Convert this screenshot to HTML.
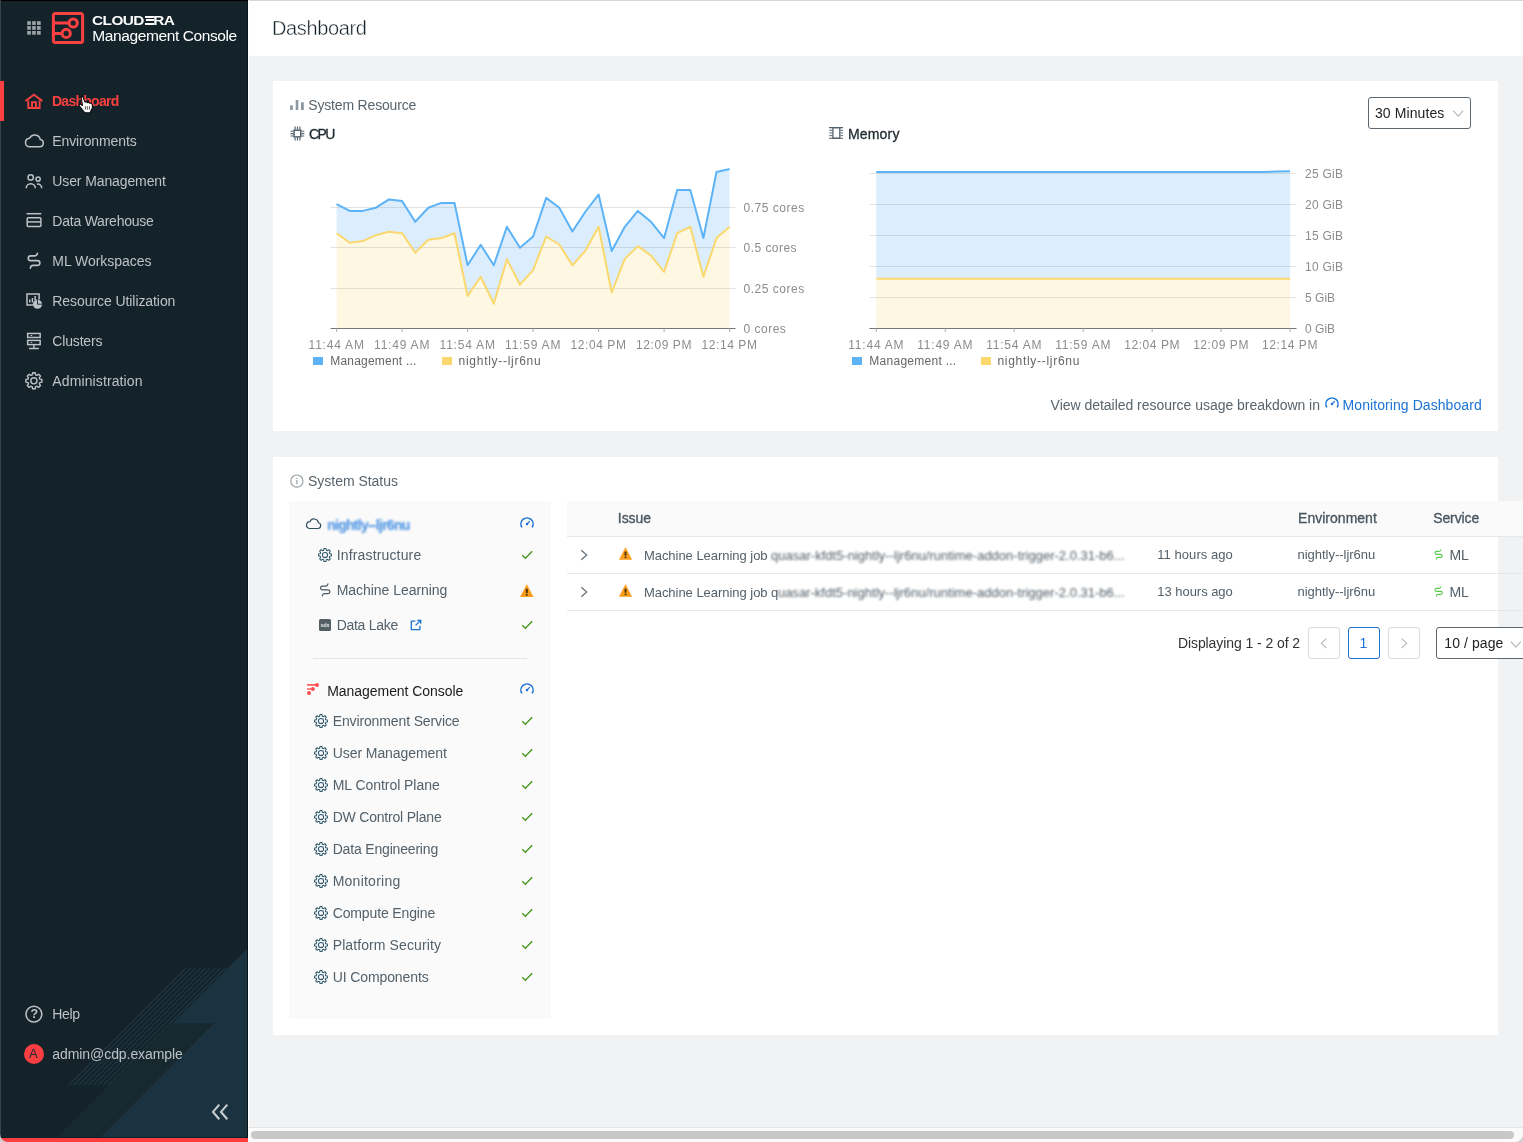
<!DOCTYPE html>
<html><head><meta charset="utf-8"><title>Dashboard</title>
<style>
html,body{margin:0;padding:0;}
body{width:1523px;height:1142px;overflow:hidden;position:relative;background:#f1f2f4;font-family:"Liberation Sans",sans-serif;}
#root div,#root span,#root svg{position:absolute;}
#root span{white-space:nowrap;}
#root{position:absolute;left:0;top:0;width:1523px;height:1142px;overflow:hidden;opacity:0.9999;will-change:transform;}
.blur{filter:blur(1.0px);}.blur2{filter:blur(0.85px);}
</style></head><body><div id="root">
<div style="left:248px;top:0px;width:1275px;height:56px;background:#fff;"></div>
<div style="left:273px;top:81px;width:1225px;height:350px;background:#fff;"></div>
<div style="left:273px;top:457px;width:1225px;height:578px;background:#fff;"></div>
<div style="left:249px;top:0px;width:1274px;height:1px;background:#d6d6d6;"></div>
<div style="left:248px;top:56px;width:1px;height:1072px;background:#fff;"></div>
<div style="left:0px;top:0px;width:248px;height:1142px;background:#14222a;"></div>
<svg style="left:0px;top:900px;" width="248" height="242" viewBox="0 0 248 242"><polygon points="248,48 172.2,123.8 213,123.8 99.8,237.5 248,237.5" fill="#1b3240"/><polygon points="171,123.8 213,123.8 99.8,237.5 56.8,237.5" fill="#17282f"/><path d="M186.0,68 L68.7,185.3" stroke="#1e3541" stroke-width="1.3" fill="none"/><path d="M190.9,68 L73.6,185.3" stroke="#1e3541" stroke-width="1.3" fill="none"/><path d="M195.8,68 L78.5,185.3" stroke="#1e3541" stroke-width="1.3" fill="none"/><path d="M200.7,68 L83.4,185.3" stroke="#1e3541" stroke-width="1.3" fill="none"/><path d="M205.6,68 L88.3,185.3" stroke="#1e3541" stroke-width="1.3" fill="none"/><path d="M210.5,68 L93.2,185.3" stroke="#1e3541" stroke-width="1.3" fill="none"/><path d="M215.4,68 L98.1,185.3" stroke="#1e3541" stroke-width="1.3" fill="none"/><path d="M220.3,68 L103.0,185.3" stroke="#1e3541" stroke-width="1.3" fill="none"/><path d="M225.2,68 L107.9,185.3" stroke="#1e3541" stroke-width="1.3" fill="none"/></svg>
<div style="left:0px;top:1137.6px;width:248px;height:4.4px;background:#fd3e40;"></div>
<div style="left:0px;top:0px;width:248px;height:1px;background:#000;"></div>
<div style="left:247px;top:1px;width:1px;height:1136px;background:#06141c;"></div>
<div style="left:0px;top:1136.9px;width:248px;height:0.8px;background:#0a222c;"></div>
<div style="left:0px;top:0px;width:1px;height:1142px;background:#3a4146;"></div>
<div style="left:0px;top:81px;width:4px;height:40px;background:#fb4040;"></div>
<span style="left:51.95px;top:91.00px;font-size:14px;line-height:20px;color:#fb4040;letter-spacing:-0.722px;font-weight:700;">Dashboard</span>
<span style="left:52.30px;top:131.00px;font-size:14px;line-height:20px;color:#bcc2c6;letter-spacing:-0.108px;">Environments</span>
<span style="left:52.30px;top:171.00px;font-size:14px;line-height:20px;color:#bcc2c6;letter-spacing:-0.112px;">User Management</span>
<span style="left:52.30px;top:211.00px;font-size:14px;line-height:20px;color:#bcc2c6;letter-spacing:-0.226px;">Data Warehouse</span>
<span style="left:52.30px;top:251.00px;font-size:14px;line-height:20px;color:#bcc2c6;letter-spacing:-0.040px;">ML Workspaces</span>
<span style="left:52.30px;top:291.00px;font-size:14px;line-height:20px;color:#bcc2c6;letter-spacing:-0.073px;">Resource Utilization</span>
<span style="left:52.30px;top:331.00px;font-size:14px;line-height:20px;color:#bcc2c6;letter-spacing:-0.164px;">Clusters</span>
<span style="left:52.30px;top:371.00px;font-size:14px;line-height:20px;color:#bcc2c6;letter-spacing:0.115px;">Administration</span>
<span style="left:52.30px;top:1004.00px;font-size:14px;line-height:20px;color:#bcc2c6;letter-spacing:-0.331px;">Help</span>
<span style="left:52.30px;top:1044.00px;font-size:14px;line-height:20px;color:#bcc2c6;letter-spacing:-0.070px;">admin@cdp.example</span>
<span style="left:91.65px;top:10.70px;font-size:12.6px;line-height:20px;color:#fff;letter-spacing:-0.444px;font-weight:700;transform:scaleX(1.22);transform-origin:0 50%;">CLOUD<i style="color:transparent;font-style:normal">Ξ</i>RA</span>
<span style="left:92.30px;top:25.50px;font-size:15.5px;line-height:20px;color:#fff;letter-spacing:-0.397px;">Management Console</span>
<div style="left:145.1px;top:15.7px;width:8.9px;height:2px;background:#fff;"></div>
<div style="left:146.2px;top:19.2px;width:7.8px;height:2px;background:#fff;"></div>
<div style="left:145.1px;top:22.6px;width:8.9px;height:2px;background:#fff;"></div>
<span style="left:272.00px;top:18.00px;font-size:20px;line-height:20px;color:#17232b;letter-spacing:-0.368px;-webkit-text-stroke:0.4px #fff;">Dashboard</span>
<span style="left:308.30px;top:95.00px;font-size:14px;line-height:20px;color:#59646c;letter-spacing:-0.177px;">System Resource</span>
<span style="left:308.90px;top:124.00px;font-size:14px;line-height:20px;color:#1f2a30;letter-spacing:-1.529px;-webkit-text-stroke:0.32px #1f2a30;">CPU</span>
<span style="left:847.90px;top:124.00px;font-size:14px;line-height:20px;color:#1f2a30;letter-spacing:0.208px;-webkit-text-stroke:0.32px #1f2a30;">Memory</span>
<span style="left:308.00px;top:471.20px;font-size:14px;line-height:20px;color:#59646c;letter-spacing:-0.021px;">System Status</span>
<svg style="left:0px;top:0px;" width="60" height="50" viewBox="0 0 60 50"><rect x="27.2" y="21.2" width="3.7" height="3.7" fill="#9ba2a6"/><rect x="32.1" y="21.2" width="3.7" height="3.7" fill="#9ba2a6"/><rect x="37.0" y="21.2" width="3.7" height="3.7" fill="#9ba2a6"/><rect x="27.2" y="26.1" width="3.7" height="3.7" fill="#9ba2a6"/><rect x="32.1" y="26.1" width="3.7" height="3.7" fill="#9ba2a6"/><rect x="37.0" y="26.1" width="3.7" height="3.7" fill="#9ba2a6"/><rect x="27.2" y="31.0" width="3.7" height="3.7" fill="#9ba2a6"/><rect x="32.1" y="31.0" width="3.7" height="3.7" fill="#9ba2a6"/><rect x="37.0" y="31.0" width="3.7" height="3.7" fill="#9ba2a6"/></svg>
<svg style="left:50px;top:10px;" width="38" height="38" viewBox="0 0 38 38"><g fill="none" stroke="#fb4040" stroke-width="3"><rect x="3.4" y="3.4" width="29.2" height="29.2" rx="2.2"/><path d="M3.4,13 H19.1 M3.4,23.4 H12.1"/><circle cx="23.2" cy="13" r="4.1"/><circle cx="16.2" cy="23.4" r="4.1"/></g></svg>
<svg style="left:24px;top:91px;" width="20" height="20" viewBox="0 0 20 20"><g fill="none" stroke="#fb4040" stroke-width="1.9" stroke-linejoin="round" stroke-linecap="butt"><path d="M1.4,10.0 L9.9,3.7 L18.4,10.0" stroke-linejoin="miter"/><path d="M4.3,9.4 V17.0 H15.6 V9.4"  stroke-linejoin="miter"/><path d="M8,17.0 V11.3 H11.9 V17.0" stroke-linejoin="miter"/></g></svg>
<svg style="left:23px;top:132px;" width="22" height="18" viewBox="0 0 22 18"><g fill="none" stroke="#bcc2c6" stroke-width="1.5" stroke-linejoin="round" stroke-linecap="butt"><path d="M6.2,14.8 H16.6 a3.7,3.7 0 0 0 0.6,-7.35 a5.6,5.6 0 0 0 -10.6,-1.2 A4.3,4.3 0 0 0 6.2,14.8 Z"/></g></svg>
<svg style="left:24px;top:172px;" width="20" height="18" viewBox="0 0 20 18"><g fill="none" stroke="#bcc2c6" stroke-width="1.5" stroke-linejoin="round" stroke-linecap="butt"><circle cx="6.7" cy="5.4" r="2.7"/><path d="M2.2,16.3 a4.6,4.6 0 0 1 9.2,0"/><circle cx="14.1" cy="7.1" r="2.1"/><path d="M12.9,12.2 A3.9,3.9 0 0 1 17.7,16.3"/></g></svg>
<svg style="left:24px;top:211px;" width="20" height="18" viewBox="0 0 20 18"><g fill="none" stroke="#bcc2c6" stroke-width="1.5" stroke-linejoin="round" stroke-linecap="butt"><path d="M2.5,2.7 H17.3"/><rect x="3.2" y="6.7" width="13.7" height="8.8" rx="1"/><path d="M3.2,10.9 H16.9"/></g></svg>
<svg style="left:24.95px;top:252.14px;" width="19.52" height="19.52" viewBox="0 0 16 16"><path d="M10.25,0.97 C10.0,2.6 9.3,3.17 8.05,3.17 L4.68,3.17 C2.0,3.17 2.0,7.1 4.68,7.1 L10.15,7.1 C12.9,7.1 12.9,11.0 10.15,11.0 L6.57,11.0 C5.2,11.0 4.6,11.9 4.37,13.26" fill="none" stroke="#bcc2c6" stroke-width="1.31" stroke-linecap="round" stroke-linejoin="round"/></svg>
<svg style="left:24px;top:291px;" width="20" height="20" viewBox="0 0 20 20"><g fill="none" stroke="#bcc2c6" stroke-width="1.5"><path d="M9,13.9 H3 V3 H15.1 V8.3"/></g><g fill="#bcc2c6"><rect x="5" y="8.5" width="1.5" height="3"/><rect x="7.7" y="7" width="1.5" height="4.5"/><rect x="10.4" y="5" width="1.5" height="4"/><circle cx="13.5" cy="13.2" r="4.6"/></g><path d="M13.5,8.4 V13.2 H18.3" fill="none" stroke="#14222a" stroke-width="0.9"/></svg>
<svg style="left:24px;top:331px;" width="20" height="20" viewBox="0 0 20 20"><g fill="none" stroke="#bcc2c6" stroke-width="1.5"><rect x="3.65" y="2.45" width="12.5" height="4"/><rect x="3.65" y="9.4" width="12.5" height="4.2"/><path d="M9.9,13.6 V17.4 M5,17.5 H14.8"/></g><g fill="#bcc2c6"><rect x="6.6" y="4" width="1.6" height="1"/><rect x="6.6" y="11" width="1.6" height="1"/></g></svg>
<svg style="left:24px;top:371px;" width="20" height="20" viewBox="0 0 20 20"><g fill="none" stroke="#bcc2c6" stroke-width="1.4" stroke-linejoin="round" stroke-linecap="butt"><path d="M8.26,3.82 L8.57,1.81 L11.23,1.81 L11.54,3.82 L12.97,4.41 L14.61,3.21 L16.49,5.09 L15.29,6.73 L15.88,8.16 L17.89,8.47 L17.89,11.13 L15.88,11.44 L15.29,12.87 L16.49,14.51 L14.61,16.39 L12.97,15.19 L11.54,15.78 L11.23,17.79 L8.57,17.79 L8.26,15.78 L6.83,15.19 L5.19,16.39 L3.31,14.51 L4.51,12.87 L3.92,11.44 L1.91,11.13 L1.91,8.47 L3.92,8.16 L4.51,6.73 L3.31,5.09 L5.19,3.21 L6.83,4.41Z"/><circle cx="9.9" cy="9.8" r="3.1"/></g></svg>
<svg style="left:24px;top:1004px;" width="20" height="20" viewBox="0 0 20 20"><g fill="none" stroke="#bcc2c6" stroke-width="1.5" stroke-linejoin="round" stroke-linecap="butt"><circle cx="9.9" cy="10.1" r="7.9"/></g></svg>
<span style="left:30.45px;top:1004.30px;font-size:12.5px;line-height:20px;color:#bcc2c6;letter-spacing:0.000px;font-weight:700;">?</span>
<div style="left:24px;top:1043.8px;width:20.2px;height:20.2px;background:#fb3e41;border-radius:50%;"></div>
<span style="left:28.90px;top:1044.00px;font-size:13px;line-height:20px;color:#1d2a33;letter-spacing:0.000px;">A</span>
<svg style="left:208px;top:1100px;" width="24" height="24" viewBox="0 0 24 24"><g fill="none" stroke="#c9cccd" stroke-width="2.1" stroke-linejoin="round" stroke-linecap="butt"><path d="M11.3,4.6 L5,11.9 L11.3,19.2 M19.3,4.6 L13,11.9 L19.3,19.2" stroke-linejoin="miter"/></g></svg>
<svg style="left:0px;top:0px;" width="1523" height="440" viewBox="0 0 1523 440"><polygon points="336.6,204.1 349.7,210.9 362.8,210.9 375.9,207.7 389.0,199.4 402.1,201.1 415.2,221.8 428.3,207.7 441.4,202.9 454.5,202.9 467.6,265.3 480.7,244.8 493.8,265.3 506.9,226.8 520.0,247.8 533.1,236.5 546.2,197.9 559.3,207.7 572.4,231.5 585.5,211.5 598.6,194.6 611.7,251.0 624.8,226.8 637.9,210.9 651.0,221.8 664.1,238.1 677.2,189.9 690.3,189.9 703.4,238.1 716.5,172.0 729.6,169.1 729.6,226.8 716.5,238.1 703.4,276.7 690.3,226.8 677.2,233.2 664.1,271.9 651.0,255.6 637.9,246.1 624.8,258.9 611.7,292.5 598.6,226.8 585.5,250.6 572.4,265.3 559.3,244.5 546.2,236.5 533.1,270.1 520.0,284.7 506.9,259.3 493.8,303.8 480.7,276.7 467.6,296.0 454.5,233.2 441.4,238.1 428.3,239.8 415.2,252.6 402.1,233.2 389.0,231.7 375.9,235.2 362.8,241.1 349.7,242.8 336.6,233.2" fill="#dceefe"/><polygon points="336.6,233.2 349.7,242.8 362.8,241.1 375.9,235.2 389.0,231.7 402.1,233.2 415.2,252.6 428.3,239.8 441.4,238.1 454.5,233.2 467.6,296.0 480.7,276.7 493.8,303.8 506.9,259.3 520.0,284.7 533.1,270.1 546.2,236.5 559.3,244.5 572.4,265.3 585.5,250.6 598.6,226.8 611.7,292.5 624.8,258.9 637.9,246.1 651.0,255.6 664.1,271.9 677.2,233.2 690.3,226.8 703.4,276.7 716.5,238.1 729.6,226.8 729.6,328.5 336.6,328.5" fill="#fef8e3"/><path d="M330.5,207.5 H735.5" stroke="#8a8a8a" stroke-opacity="0.24" stroke-width="1"/><path d="M330.5,247.5 H735.5" stroke="#8a8a8a" stroke-opacity="0.24" stroke-width="1"/><path d="M330.5,288.5 H735.5" stroke="#8a8a8a" stroke-opacity="0.24" stroke-width="1"/><polyline points="336.6,204.1 349.7,210.9 362.8,210.9 375.9,207.7 389.0,199.4 402.1,201.1 415.2,221.8 428.3,207.7 441.4,202.9 454.5,202.9 467.6,265.3 480.7,244.8 493.8,265.3 506.9,226.8 520.0,247.8 533.1,236.5 546.2,197.9 559.3,207.7 572.4,231.5 585.5,211.5 598.6,194.6 611.7,251.0 624.8,226.8 637.9,210.9 651.0,221.8 664.1,238.1 677.2,189.9 690.3,189.9 703.4,238.1 716.5,172.0 729.6,169.1" fill="none" stroke="#5cb3f7" stroke-width="2" stroke-linejoin="round"/><polyline points="336.6,233.2 349.7,242.8 362.8,241.1 375.9,235.2 389.0,231.7 402.1,233.2 415.2,252.6 428.3,239.8 441.4,238.1 454.5,233.2 467.6,296.0 480.7,276.7 493.8,303.8 506.9,259.3 520.0,284.7 533.1,270.1 546.2,236.5 559.3,244.5 572.4,265.3 585.5,250.6 598.6,226.8 611.7,292.5 624.8,258.9 637.9,246.1 651.0,255.6 664.1,271.9 677.2,233.2 690.3,226.8 703.4,276.7 716.5,238.1 729.6,226.8" fill="none" stroke="#fad86e" stroke-width="2" stroke-linejoin="round"/><path d="M330.5,328.5 H735.5" stroke="#777" stroke-width="1"/><path d="M336.6,328.5 V332.0" stroke="#aaa" stroke-width="1"/><path d="M402.1,328.5 V332.0" stroke="#aaa" stroke-width="1"/><path d="M467.6,328.5 V332.0" stroke="#aaa" stroke-width="1"/><path d="M533.1,328.5 V332.0" stroke="#aaa" stroke-width="1"/><path d="M598.6,328.5 V332.0" stroke="#aaa" stroke-width="1"/><path d="M664.1,328.5 V332.0" stroke="#aaa" stroke-width="1"/><path d="M729.6,328.5 V332.0" stroke="#aaa" stroke-width="1"/></svg>
<span style="left:743.60px;top:198.10px;font-size:12px;line-height:20px;color:#8c8c8c;letter-spacing:0.507px;">0.75 cores</span>
<span style="left:743.60px;top:238.30px;font-size:12px;line-height:20px;color:#8c8c8c;letter-spacing:0.443px;">0.5 cores</span>
<span style="left:743.60px;top:279.10px;font-size:12px;line-height:20px;color:#8c8c8c;letter-spacing:0.507px;">0.25 cores</span>
<span style="left:743.60px;top:319.10px;font-size:12px;line-height:20px;color:#8c8c8c;letter-spacing:0.475px;">0 cores</span>
<span style="left:308.60px;top:335.10px;font-size:12px;line-height:20px;color:#8c8c8c;letter-spacing:0.784px;">11:44 AM</span>
<span style="left:374.10px;top:335.10px;font-size:12px;line-height:20px;color:#8c8c8c;letter-spacing:0.784px;">11:49 AM</span>
<span style="left:439.60px;top:335.10px;font-size:12px;line-height:20px;color:#8c8c8c;letter-spacing:0.784px;">11:54 AM</span>
<span style="left:505.10px;top:335.10px;font-size:12px;line-height:20px;color:#8c8c8c;letter-spacing:0.784px;">11:59 AM</span>
<span style="left:570.60px;top:335.10px;font-size:12px;line-height:20px;color:#8c8c8c;letter-spacing:0.562px;">12:04 PM</span>
<span style="left:636.10px;top:335.10px;font-size:12px;line-height:20px;color:#8c8c8c;letter-spacing:0.562px;">12:09 PM</span>
<span style="left:701.60px;top:335.10px;font-size:12px;line-height:20px;color:#8c8c8c;letter-spacing:0.562px;">12:14 PM</span>
<svg style="left:0px;top:0px;" width="1523" height="440" viewBox="0 0 1523 440"><polygon points="876.3,171.9 890.1,171.9 903.9,171.9 917.7,171.9 931.5,171.9 945.3,171.9 959.1,171.9 972.9,171.9 986.6,171.9 1000.4,171.9 1014.2,171.9 1028.0,171.9 1041.8,171.9 1055.6,171.9 1069.4,171.9 1083.2,171.9 1097.0,171.9 1110.8,171.9 1124.6,171.9 1138.4,171.9 1152.2,171.9 1166.0,171.9 1179.8,171.9 1193.5,171.9 1207.3,171.9 1221.1,171.9 1234.9,171.9 1248.7,171.9 1262.5,171.9 1276.3,171.6 1290.1,171.3 1290.1,278.7 1276.3,278.7 1262.5,278.7 1248.7,278.7 1234.9,278.7 1221.1,278.7 1207.3,278.7 1193.5,278.7 1179.8,278.7 1166.0,278.7 1152.2,278.7 1138.4,278.7 1124.6,278.7 1110.8,278.7 1097.0,278.7 1083.2,278.7 1069.4,278.7 1055.6,278.7 1041.8,278.7 1028.0,278.7 1014.2,278.7 1000.4,278.7 986.6,278.7 972.9,278.7 959.1,278.7 945.3,278.7 931.5,278.7 917.7,278.7 903.9,278.7 890.1,278.7 876.3,278.7" fill="#dceefe"/><polygon points="876.3,278.7 890.1,278.7 903.9,278.7 917.7,278.7 931.5,278.7 945.3,278.7 959.1,278.7 972.9,278.7 986.6,278.7 1000.4,278.7 1014.2,278.7 1028.0,278.7 1041.8,278.7 1055.6,278.7 1069.4,278.7 1083.2,278.7 1097.0,278.7 1110.8,278.7 1124.6,278.7 1138.4,278.7 1152.2,278.7 1166.0,278.7 1179.8,278.7 1193.5,278.7 1207.3,278.7 1221.1,278.7 1234.9,278.7 1248.7,278.7 1262.5,278.7 1276.3,278.7 1290.1,278.7 1290.1,328.5 876.3,328.5" fill="#fef8e3"/><path d="M869.5,173.5 H1296.5" stroke="#8a8a8a" stroke-opacity="0.24" stroke-width="1"/><path d="M869.5,204.5 H1296.5" stroke="#8a8a8a" stroke-opacity="0.24" stroke-width="1"/><path d="M869.5,235.5 H1296.5" stroke="#8a8a8a" stroke-opacity="0.24" stroke-width="1"/><path d="M869.5,266.5 H1296.5" stroke="#8a8a8a" stroke-opacity="0.24" stroke-width="1"/><path d="M869.5,297.5 H1296.5" stroke="#8a8a8a" stroke-opacity="0.24" stroke-width="1"/><polyline points="876.3,171.9 890.1,171.9 903.9,171.9 917.7,171.9 931.5,171.9 945.3,171.9 959.1,171.9 972.9,171.9 986.6,171.9 1000.4,171.9 1014.2,171.9 1028.0,171.9 1041.8,171.9 1055.6,171.9 1069.4,171.9 1083.2,171.9 1097.0,171.9 1110.8,171.9 1124.6,171.9 1138.4,171.9 1152.2,171.9 1166.0,171.9 1179.8,171.9 1193.5,171.9 1207.3,171.9 1221.1,171.9 1234.9,171.9 1248.7,171.9 1262.5,171.9 1276.3,171.6 1290.1,171.3" fill="none" stroke="#5cb3f7" stroke-width="2" stroke-linejoin="round"/><polyline points="876.3,278.7 890.1,278.7 903.9,278.7 917.7,278.7 931.5,278.7 945.3,278.7 959.1,278.7 972.9,278.7 986.6,278.7 1000.4,278.7 1014.2,278.7 1028.0,278.7 1041.8,278.7 1055.6,278.7 1069.4,278.7 1083.2,278.7 1097.0,278.7 1110.8,278.7 1124.6,278.7 1138.4,278.7 1152.2,278.7 1166.0,278.7 1179.8,278.7 1193.5,278.7 1207.3,278.7 1221.1,278.7 1234.9,278.7 1248.7,278.7 1262.5,278.7 1276.3,278.7 1290.1,278.7" fill="none" stroke="#fad86e" stroke-width="2" stroke-linejoin="round"/><path d="M869.5,328.5 H1296.5" stroke="#777" stroke-width="1"/><path d="M876.3,328.5 V332.0" stroke="#aaa" stroke-width="1"/><path d="M945.3,328.5 V332.0" stroke="#aaa" stroke-width="1"/><path d="M1014.2,328.5 V332.0" stroke="#aaa" stroke-width="1"/><path d="M1083.2,328.5 V332.0" stroke="#aaa" stroke-width="1"/><path d="M1152.2,328.5 V332.0" stroke="#aaa" stroke-width="1"/><path d="M1221.1,328.5 V332.0" stroke="#aaa" stroke-width="1"/><path d="M1290.1,328.5 V332.0" stroke="#aaa" stroke-width="1"/></svg>
<span style="left:1305.10px;top:164.10px;font-size:12px;line-height:20px;color:#8c8c8c;letter-spacing:0.243px;">25 GiB</span>
<span style="left:1305.10px;top:195.20px;font-size:12px;line-height:20px;color:#8c8c8c;letter-spacing:0.243px;">20 GiB</span>
<span style="left:1305.10px;top:226.20px;font-size:12px;line-height:20px;color:#8c8c8c;letter-spacing:0.243px;">15 GiB</span>
<span style="left:1305.10px;top:257.20px;font-size:12px;line-height:20px;color:#8c8c8c;letter-spacing:0.243px;">10 GiB</span>
<span style="left:1305.10px;top:288.10px;font-size:12px;line-height:20px;color:#8c8c8c;letter-spacing:-0.003px;">5 GiB</span>
<span style="left:1305.10px;top:319.00px;font-size:12px;line-height:20px;color:#8c8c8c;letter-spacing:-0.003px;">0 GiB</span>
<span style="left:848.30px;top:335.10px;font-size:12px;line-height:20px;color:#8c8c8c;letter-spacing:0.784px;">11:44 AM</span>
<span style="left:917.27px;top:335.10px;font-size:12px;line-height:20px;color:#8c8c8c;letter-spacing:0.784px;">11:49 AM</span>
<span style="left:986.23px;top:335.10px;font-size:12px;line-height:20px;color:#8c8c8c;letter-spacing:0.784px;">11:54 AM</span>
<span style="left:1055.20px;top:335.10px;font-size:12px;line-height:20px;color:#8c8c8c;letter-spacing:0.784px;">11:59 AM</span>
<span style="left:1124.17px;top:335.10px;font-size:12px;line-height:20px;color:#8c8c8c;letter-spacing:0.562px;">12:04 PM</span>
<span style="left:1193.13px;top:335.10px;font-size:12px;line-height:20px;color:#8c8c8c;letter-spacing:0.562px;">12:09 PM</span>
<span style="left:1262.10px;top:335.10px;font-size:12px;line-height:20px;color:#8c8c8c;letter-spacing:0.562px;">12:14 PM</span>
<div style="left:313px;top:356.6px;width:10px;height:8.6px;background:#5cb3f7;"></div>
<span style="left:330.30px;top:351.20px;font-size:12px;line-height:20px;color:#666;letter-spacing:0.202px;">Management ...</span>
<div style="left:441.7px;top:356.6px;width:10px;height:8.6px;background:#fad86e;"></div>
<span style="left:458.60px;top:351.20px;font-size:12px;line-height:20px;color:#666;letter-spacing:0.712px;">nightly--ljr6nu</span>
<div style="left:852.1px;top:356.6px;width:10px;height:8.6px;background:#5cb3f7;"></div>
<span style="left:869.30px;top:351.20px;font-size:12px;line-height:20px;color:#666;letter-spacing:0.271px;">Management ...</span>
<div style="left:980.7px;top:356.6px;width:10px;height:8.6px;background:#fad86e;"></div>
<span style="left:997.40px;top:351.20px;font-size:12px;line-height:20px;color:#666;letter-spacing:0.712px;">nightly--ljr6nu</span>
<div style="left:1368px;top:97px;width:103px;height:32px;box-sizing:border-box;border:1px solid #5d6870;border-radius:3px;background:#fff;"></div>
<span style="left:1374.90px;top:103.30px;font-size:14px;line-height:20px;color:#222;letter-spacing:0.102px;">30 Minutes</span>
<svg style="left:1451px;top:106px;" width="14" height="14" viewBox="0 0 14 14"><g fill="none" stroke="#b5b5b5" stroke-width="1.1" stroke-linejoin="round" stroke-linecap="butt"><path d="M2.3,4.6 L7.2,10.2 L12.1,4.6"/></g></svg>
<span style="left:1050.60px;top:395.00px;font-size:14px;line-height:20px;color:#59646c;letter-spacing:-0.030px;">View detailed resource usage breakdown in</span>
<span style="left:1342.60px;top:395.00px;font-size:14px;line-height:20px;color:#1b73d3;letter-spacing:0.071px;">Monitoring Dashboard</span>
<svg style="left:288px;top:98px;" width="18" height="14" viewBox="0 0 18 14"><g fill="#8d979f"><rect x="2.1" y="7.3" width="2.7" height="4.7"/><rect x="7.7" y="2" width="2.6" height="10"/><rect x="13" y="4.3" width="2.8" height="7.7"/></g></svg>
<svg style="left:289.6px;top:125.6px;" width="15" height="15" viewBox="0 0 15 15"><rect x="4.05" y="4.2" width="6.7" height="6.7" fill="none" stroke="#50606c" stroke-width="1.5"/><path d="M5.1,0.6 V3.4 M5.1,11.7 V14.4 M0.5,5.199999999999999 H3.3 M11.5,5.199999999999999 H14.3" stroke="#50606c" stroke-width="1.15" fill="none"/><path d="M7.5,0.6 V3.4 M7.5,11.7 V14.4 M0.5,7.6 H3.3 M11.5,7.6 H14.3" stroke="#50606c" stroke-width="1.15" fill="none"/><path d="M9.9,0.6 V3.4 M9.9,11.7 V14.4 M0.5,10.0 H3.3 M11.5,10.0 H14.3" stroke="#50606c" stroke-width="1.15" fill="none"/></svg>
<svg style="left:829px;top:127.0px;" width="14" height="12" viewBox="0 0 14 12"><path d="M0,0.6 H14 M0,11.3 H14" stroke="#50606c" stroke-width="1.1" fill="none"/><rect x="3.9" y="0.6" width="6.9" height="10.7" fill="none" stroke="#50606c" stroke-width="1.3"/><path d="M0.3,3.3 H3.3 M11.4,3.3 H14" stroke="#50606c" stroke-width="0.9" fill="none"/><path d="M0.3,5.95 H3.3 M11.4,5.95 H14" stroke="#50606c" stroke-width="0.9" fill="none"/><path d="M0.3,8.6 H3.3 M11.4,8.6 H14" stroke="#50606c" stroke-width="0.9" fill="none"/></svg>
<svg style="left:1322px;top:393.9px;" width="20" height="20" viewBox="0 0 20 20"><path d="M4.94,13.41 A6.1,6.1 0 1 1 15.06,13.41" fill="none" stroke="#1b73d3" stroke-width="1.5"/><circle cx="10" cy="10" r="1.25" fill="#1b73d3"/><path d="M10,10 L12.8,7.2" stroke="#1b73d3" stroke-width="1.1"/></svg>
<svg style="left:288px;top:472px;" width="18" height="18" viewBox="0 0 18 18"><g fill="none" stroke="#9aa2a7" stroke-width="1.2" stroke-linejoin="round" stroke-linecap="butt"><circle cx="8.9" cy="9.1" r="6.1"/></g></svg>
<svg style="left:288px;top:472px;" width="18" height="18" viewBox="0 0 18 18"><rect x="8.3" y="8" width="1.2" height="4.3" fill="#9aa2a7"/><rect x="8.3" y="5.8" width="1.2" height="1.3" fill="#9aa2a7"/></svg>
<div style="left:289px;top:501px;width:262px;height:517.5px;background:#fafafa;"></div>
<svg style="left:303.5px;top:515.7px;" width="20" height="16" viewBox="0 0 20 16"><g fill="none" stroke="#33505f" stroke-width="1.2" stroke-linejoin="round" stroke-linecap="butt"><path d="M5.4,12.5 H13.9 a2.9,2.9 0 0 0 0.45,-5.75 a4.4,4.4 0 0 0 -8.4,-1.1 A3.45,3.45 0 0 0 5.4,12.5 Z"/></g></svg>
<span class="blur" style="left:327.15px;top:515.20px;font-size:14px;line-height:20px;color:#4690e2;letter-spacing:-0.727px;font-weight:700;">nightly--ljr6nu</span>
<svg style="left:517px;top:514.3px;" width="20" height="20" viewBox="0 0 20 20"><path d="M4.94,13.41 A6.1,6.1 0 1 1 15.06,13.41" fill="none" stroke="#1b73d3" stroke-width="1.5"/><circle cx="10" cy="10" r="1.25" fill="#1b73d3"/><path d="M10,10 L12.8,7.2" stroke="#1b73d3" stroke-width="1.1"/></svg>
<svg style="left:317px;top:547.1px;" width="16" height="16" viewBox="0 0 16 16"><g fill="none" stroke="#2e566b" stroke-width="1.05" stroke-linejoin="round" stroke-linecap="butt"><path d="M6.68,3.18 L6.93,1.59 L9.07,1.59 L9.32,3.18 L10.48,3.66 L11.78,2.71 L13.29,4.22 L12.34,5.52 L12.82,6.68 L14.41,6.93 L14.41,9.07 L12.82,9.32 L12.34,10.48 L13.29,11.78 L11.78,13.29 L10.48,12.34 L9.32,12.82 L9.07,14.41 L6.93,14.41 L6.68,12.82 L5.52,12.34 L4.22,13.29 L2.71,11.78 L3.66,10.48 L3.18,9.32 L1.59,9.07 L1.59,6.93 L3.18,6.68 L3.66,5.52 L2.71,4.22 L4.22,2.71 L5.52,3.66Z"/><circle cx="8" cy="8" r="2.6"/></g></svg>
<span style="left:336.70px;top:545.00px;font-size:14px;line-height:20px;color:#54616a;letter-spacing:0.156px;">Infrastructure</span>
<svg style="left:519.3px;top:547px;" width="16" height="16" viewBox="0 0 16 16"><g fill="none" stroke="#4a9522" stroke-width="1.35" stroke-linejoin="round" stroke-linecap="butt"><path d="M3.2,8.2 L6.4,11.3 L13.2,4.2" stroke-linejoin="miter"/></g></svg>
<svg style="left:317.62px;top:582.81px;" width="15.52" height="15.52" viewBox="0 0 16 16"><path d="M10.25,0.97 C10.0,2.6 9.3,3.17 8.05,3.17 L4.68,3.17 C2.0,3.17 2.0,7.1 4.68,7.1 L10.15,7.1 C12.9,7.1 12.9,11.0 10.15,11.0 L6.57,11.0 C5.2,11.0 4.6,11.9 4.37,13.26" fill="none" stroke="#485862" stroke-width="1.19" stroke-linecap="round" stroke-linejoin="round"/></svg>
<span style="left:336.70px;top:580.00px;font-size:14px;line-height:20px;color:#54616a;letter-spacing:-0.040px;">Machine Learning</span>
<svg style="left:520.1px;top:583.9px;" width="13.6" height="13.6" viewBox="0 0 13.6 13.6"><path d="M6.8,0.7 L13.2,13.0 H0.4 Z" fill="#fa9d1c" stroke="#fa9d1c" stroke-width="0.6" stroke-linejoin="round"/><rect x="5.8" y="4.8" width="2" height="4.3" fill="#4d3307"/><rect x="5.8" y="10.1" width="2" height="1.5" fill="#4d3307"/></svg>
<div style="left:319px;top:619.2px;width:12px;height:11.7px;background:#545e65;border-radius:1.5px;"></div>
<span style="left:320.45px;top:615.10px;font-size:5.5px;line-height:20px;color:#e8eaeb;letter-spacing:-0.163px;font-weight:700;">sdx</span>
<span style="left:336.70px;top:615.00px;font-size:14px;line-height:20px;color:#54616a;letter-spacing:-0.290px;">Data Lake</span>
<svg style="left:409px;top:618px;" width="14" height="14" viewBox="0 0 14 14"><g fill="none" stroke="#1b73d3" stroke-width="1.3" stroke-linejoin="round" stroke-linecap="butt"><path d="M6.3,3.1 H2.3 V11.6 H10.9 V7.7"/><path d="M8.2,2.3 H11.7 V5.8 M11.5,2.5 L6.6,7.4" stroke-linejoin="miter"/></g></svg>
<svg style="left:519.3px;top:617px;" width="16" height="16" viewBox="0 0 16 16"><g fill="none" stroke="#4a9522" stroke-width="1.35" stroke-linejoin="round" stroke-linecap="butt"><path d="M3.2,8.2 L6.4,11.3 L13.2,4.2" stroke-linejoin="miter"/></g></svg>
<div style="left:313px;top:658px;width:214px;height:1px;background:#e4e5e6;"></div>
<svg style="left:305px;top:682px;" width="16" height="16" viewBox="0 0 16 16"><g stroke="#ff5e5e" stroke-width="1.6" fill="none"><path d="M2,2.9 H11 M2,7 H7"/></g><g fill="#ff4f4f"><circle cx="12.0" cy="2.9" r="2.0"/><circle cx="7.9" cy="7.0" r="2.0"/><circle cx="4.0" cy="11.0" r="2.0"/></g></svg>
<span style="left:327.20px;top:681.00px;font-size:14px;line-height:20px;color:#1b1b1b;letter-spacing:-0.045px;">Management Console</span>
<svg style="left:517px;top:680.4px;" width="20" height="20" viewBox="0 0 20 20"><path d="M4.94,13.41 A6.1,6.1 0 1 1 15.06,13.41" fill="none" stroke="#1b73d3" stroke-width="1.5"/><circle cx="10" cy="10" r="1.25" fill="#1b73d3"/><path d="M10,10 L12.8,7.2" stroke="#1b73d3" stroke-width="1.1"/></svg>
<svg style="left:312.9px;top:713px;" width="16" height="16" viewBox="0 0 16 16"><g fill="none" stroke="#2e566b" stroke-width="1.05" stroke-linejoin="round" stroke-linecap="butt"><path d="M6.68,3.18 L6.93,1.59 L9.07,1.59 L9.32,3.18 L10.48,3.66 L11.78,2.71 L13.29,4.22 L12.34,5.52 L12.82,6.68 L14.41,6.93 L14.41,9.07 L12.82,9.32 L12.34,10.48 L13.29,11.78 L11.78,13.29 L10.48,12.34 L9.32,12.82 L9.07,14.41 L6.93,14.41 L6.68,12.82 L5.52,12.34 L4.22,13.29 L2.71,11.78 L3.66,10.48 L3.18,9.32 L1.59,9.07 L1.59,6.93 L3.18,6.68 L3.66,5.52 L2.71,4.22 L4.22,2.71 L5.52,3.66Z"/><circle cx="8" cy="8" r="2.6"/></g></svg>
<span style="left:332.70px;top:711.00px;font-size:14px;line-height:20px;color:#54616a;letter-spacing:-0.126px;">Environment Service</span>
<svg style="left:519.3px;top:713px;" width="16" height="16" viewBox="0 0 16 16"><g fill="none" stroke="#4a9522" stroke-width="1.35" stroke-linejoin="round" stroke-linecap="butt"><path d="M3.2,8.2 L6.4,11.3 L13.2,4.2" stroke-linejoin="miter"/></g></svg>
<svg style="left:312.9px;top:745px;" width="16" height="16" viewBox="0 0 16 16"><g fill="none" stroke="#2e566b" stroke-width="1.05" stroke-linejoin="round" stroke-linecap="butt"><path d="M6.68,3.18 L6.93,1.59 L9.07,1.59 L9.32,3.18 L10.48,3.66 L11.78,2.71 L13.29,4.22 L12.34,5.52 L12.82,6.68 L14.41,6.93 L14.41,9.07 L12.82,9.32 L12.34,10.48 L13.29,11.78 L11.78,13.29 L10.48,12.34 L9.32,12.82 L9.07,14.41 L6.93,14.41 L6.68,12.82 L5.52,12.34 L4.22,13.29 L2.71,11.78 L3.66,10.48 L3.18,9.32 L1.59,9.07 L1.59,6.93 L3.18,6.68 L3.66,5.52 L2.71,4.22 L4.22,2.71 L5.52,3.66Z"/><circle cx="8" cy="8" r="2.6"/></g></svg>
<span style="left:332.70px;top:743.00px;font-size:14px;line-height:20px;color:#54616a;letter-spacing:-0.069px;">User Management</span>
<svg style="left:519.3px;top:745px;" width="16" height="16" viewBox="0 0 16 16"><g fill="none" stroke="#4a9522" stroke-width="1.35" stroke-linejoin="round" stroke-linecap="butt"><path d="M3.2,8.2 L6.4,11.3 L13.2,4.2" stroke-linejoin="miter"/></g></svg>
<svg style="left:312.9px;top:777px;" width="16" height="16" viewBox="0 0 16 16"><g fill="none" stroke="#2e566b" stroke-width="1.05" stroke-linejoin="round" stroke-linecap="butt"><path d="M6.68,3.18 L6.93,1.59 L9.07,1.59 L9.32,3.18 L10.48,3.66 L11.78,2.71 L13.29,4.22 L12.34,5.52 L12.82,6.68 L14.41,6.93 L14.41,9.07 L12.82,9.32 L12.34,10.48 L13.29,11.78 L11.78,13.29 L10.48,12.34 L9.32,12.82 L9.07,14.41 L6.93,14.41 L6.68,12.82 L5.52,12.34 L4.22,13.29 L2.71,11.78 L3.66,10.48 L3.18,9.32 L1.59,9.07 L1.59,6.93 L3.18,6.68 L3.66,5.52 L2.71,4.22 L4.22,2.71 L5.52,3.66Z"/><circle cx="8" cy="8" r="2.6"/></g></svg>
<span style="left:332.70px;top:775.00px;font-size:14px;line-height:20px;color:#54616a;letter-spacing:-0.043px;">ML Control Plane</span>
<svg style="left:519.3px;top:777px;" width="16" height="16" viewBox="0 0 16 16"><g fill="none" stroke="#4a9522" stroke-width="1.35" stroke-linejoin="round" stroke-linecap="butt"><path d="M3.2,8.2 L6.4,11.3 L13.2,4.2" stroke-linejoin="miter"/></g></svg>
<svg style="left:312.9px;top:809px;" width="16" height="16" viewBox="0 0 16 16"><g fill="none" stroke="#2e566b" stroke-width="1.05" stroke-linejoin="round" stroke-linecap="butt"><path d="M6.68,3.18 L6.93,1.59 L9.07,1.59 L9.32,3.18 L10.48,3.66 L11.78,2.71 L13.29,4.22 L12.34,5.52 L12.82,6.68 L14.41,6.93 L14.41,9.07 L12.82,9.32 L12.34,10.48 L13.29,11.78 L11.78,13.29 L10.48,12.34 L9.32,12.82 L9.07,14.41 L6.93,14.41 L6.68,12.82 L5.52,12.34 L4.22,13.29 L2.71,11.78 L3.66,10.48 L3.18,9.32 L1.59,9.07 L1.59,6.93 L3.18,6.68 L3.66,5.52 L2.71,4.22 L4.22,2.71 L5.52,3.66Z"/><circle cx="8" cy="8" r="2.6"/></g></svg>
<span style="left:332.70px;top:807.00px;font-size:14px;line-height:20px;color:#54616a;letter-spacing:-0.203px;">DW Control Plane</span>
<svg style="left:519.3px;top:809px;" width="16" height="16" viewBox="0 0 16 16"><g fill="none" stroke="#4a9522" stroke-width="1.35" stroke-linejoin="round" stroke-linecap="butt"><path d="M3.2,8.2 L6.4,11.3 L13.2,4.2" stroke-linejoin="miter"/></g></svg>
<svg style="left:312.9px;top:841px;" width="16" height="16" viewBox="0 0 16 16"><g fill="none" stroke="#2e566b" stroke-width="1.05" stroke-linejoin="round" stroke-linecap="butt"><path d="M6.68,3.18 L6.93,1.59 L9.07,1.59 L9.32,3.18 L10.48,3.66 L11.78,2.71 L13.29,4.22 L12.34,5.52 L12.82,6.68 L14.41,6.93 L14.41,9.07 L12.82,9.32 L12.34,10.48 L13.29,11.78 L11.78,13.29 L10.48,12.34 L9.32,12.82 L9.07,14.41 L6.93,14.41 L6.68,12.82 L5.52,12.34 L4.22,13.29 L2.71,11.78 L3.66,10.48 L3.18,9.32 L1.59,9.07 L1.59,6.93 L3.18,6.68 L3.66,5.52 L2.71,4.22 L4.22,2.71 L5.52,3.66Z"/><circle cx="8" cy="8" r="2.6"/></g></svg>
<span style="left:332.70px;top:839.00px;font-size:14px;line-height:20px;color:#54616a;letter-spacing:-0.179px;">Data Engineering</span>
<svg style="left:519.3px;top:841px;" width="16" height="16" viewBox="0 0 16 16"><g fill="none" stroke="#4a9522" stroke-width="1.35" stroke-linejoin="round" stroke-linecap="butt"><path d="M3.2,8.2 L6.4,11.3 L13.2,4.2" stroke-linejoin="miter"/></g></svg>
<svg style="left:312.9px;top:873px;" width="16" height="16" viewBox="0 0 16 16"><g fill="none" stroke="#2e566b" stroke-width="1.05" stroke-linejoin="round" stroke-linecap="butt"><path d="M6.68,3.18 L6.93,1.59 L9.07,1.59 L9.32,3.18 L10.48,3.66 L11.78,2.71 L13.29,4.22 L12.34,5.52 L12.82,6.68 L14.41,6.93 L14.41,9.07 L12.82,9.32 L12.34,10.48 L13.29,11.78 L11.78,13.29 L10.48,12.34 L9.32,12.82 L9.07,14.41 L6.93,14.41 L6.68,12.82 L5.52,12.34 L4.22,13.29 L2.71,11.78 L3.66,10.48 L3.18,9.32 L1.59,9.07 L1.59,6.93 L3.18,6.68 L3.66,5.52 L2.71,4.22 L4.22,2.71 L5.52,3.66Z"/><circle cx="8" cy="8" r="2.6"/></g></svg>
<span style="left:332.70px;top:871.00px;font-size:14px;line-height:20px;color:#54616a;letter-spacing:0.237px;">Monitoring</span>
<svg style="left:519.3px;top:873px;" width="16" height="16" viewBox="0 0 16 16"><g fill="none" stroke="#4a9522" stroke-width="1.35" stroke-linejoin="round" stroke-linecap="butt"><path d="M3.2,8.2 L6.4,11.3 L13.2,4.2" stroke-linejoin="miter"/></g></svg>
<svg style="left:312.9px;top:905px;" width="16" height="16" viewBox="0 0 16 16"><g fill="none" stroke="#2e566b" stroke-width="1.05" stroke-linejoin="round" stroke-linecap="butt"><path d="M6.68,3.18 L6.93,1.59 L9.07,1.59 L9.32,3.18 L10.48,3.66 L11.78,2.71 L13.29,4.22 L12.34,5.52 L12.82,6.68 L14.41,6.93 L14.41,9.07 L12.82,9.32 L12.34,10.48 L13.29,11.78 L11.78,13.29 L10.48,12.34 L9.32,12.82 L9.07,14.41 L6.93,14.41 L6.68,12.82 L5.52,12.34 L4.22,13.29 L2.71,11.78 L3.66,10.48 L3.18,9.32 L1.59,9.07 L1.59,6.93 L3.18,6.68 L3.66,5.52 L2.71,4.22 L4.22,2.71 L5.52,3.66Z"/><circle cx="8" cy="8" r="2.6"/></g></svg>
<span style="left:332.70px;top:903.00px;font-size:14px;line-height:20px;color:#54616a;letter-spacing:-0.138px;">Compute Engine</span>
<svg style="left:519.3px;top:905px;" width="16" height="16" viewBox="0 0 16 16"><g fill="none" stroke="#4a9522" stroke-width="1.35" stroke-linejoin="round" stroke-linecap="butt"><path d="M3.2,8.2 L6.4,11.3 L13.2,4.2" stroke-linejoin="miter"/></g></svg>
<svg style="left:312.9px;top:937px;" width="16" height="16" viewBox="0 0 16 16"><g fill="none" stroke="#2e566b" stroke-width="1.05" stroke-linejoin="round" stroke-linecap="butt"><path d="M6.68,3.18 L6.93,1.59 L9.07,1.59 L9.32,3.18 L10.48,3.66 L11.78,2.71 L13.29,4.22 L12.34,5.52 L12.82,6.68 L14.41,6.93 L14.41,9.07 L12.82,9.32 L12.34,10.48 L13.29,11.78 L11.78,13.29 L10.48,12.34 L9.32,12.82 L9.07,14.41 L6.93,14.41 L6.68,12.82 L5.52,12.34 L4.22,13.29 L2.71,11.78 L3.66,10.48 L3.18,9.32 L1.59,9.07 L1.59,6.93 L3.18,6.68 L3.66,5.52 L2.71,4.22 L4.22,2.71 L5.52,3.66Z"/><circle cx="8" cy="8" r="2.6"/></g></svg>
<span style="left:332.70px;top:935.00px;font-size:14px;line-height:20px;color:#54616a;letter-spacing:0.101px;">Platform Security</span>
<svg style="left:519.3px;top:937px;" width="16" height="16" viewBox="0 0 16 16"><g fill="none" stroke="#4a9522" stroke-width="1.35" stroke-linejoin="round" stroke-linecap="butt"><path d="M3.2,8.2 L6.4,11.3 L13.2,4.2" stroke-linejoin="miter"/></g></svg>
<svg style="left:312.9px;top:969px;" width="16" height="16" viewBox="0 0 16 16"><g fill="none" stroke="#2e566b" stroke-width="1.05" stroke-linejoin="round" stroke-linecap="butt"><path d="M6.68,3.18 L6.93,1.59 L9.07,1.59 L9.32,3.18 L10.48,3.66 L11.78,2.71 L13.29,4.22 L12.34,5.52 L12.82,6.68 L14.41,6.93 L14.41,9.07 L12.82,9.32 L12.34,10.48 L13.29,11.78 L11.78,13.29 L10.48,12.34 L9.32,12.82 L9.07,14.41 L6.93,14.41 L6.68,12.82 L5.52,12.34 L4.22,13.29 L2.71,11.78 L3.66,10.48 L3.18,9.32 L1.59,9.07 L1.59,6.93 L3.18,6.68 L3.66,5.52 L2.71,4.22 L4.22,2.71 L5.52,3.66Z"/><circle cx="8" cy="8" r="2.6"/></g></svg>
<span style="left:332.70px;top:967.00px;font-size:14px;line-height:20px;color:#54616a;letter-spacing:-0.106px;">UI Components</span>
<svg style="left:519.3px;top:969px;" width="16" height="16" viewBox="0 0 16 16"><g fill="none" stroke="#4a9522" stroke-width="1.35" stroke-linejoin="round" stroke-linecap="butt"><path d="M3.2,8.2 L6.4,11.3 L13.2,4.2" stroke-linejoin="miter"/></g></svg>
<div style="left:567px;top:501px;width:956px;height:35.5px;background:#fafafa;"></div>
<div style="left:567px;top:536px;width:956px;height:1px;background:#e6e7e8;"></div>
<div style="left:567px;top:573px;width:956px;height:1px;background:#e6e7e8;"></div>
<div style="left:567px;top:610px;width:956px;height:1px;background:#e6e7e8;"></div>
<span style="left:617.80px;top:508.30px;font-size:14px;line-height:20px;color:#48555e;letter-spacing:-0.040px;-webkit-text-stroke:0.32px #48555e;">Issue</span>
<span style="left:1298.10px;top:508.30px;font-size:14px;line-height:20px;color:#48555e;letter-spacing:0.011px;-webkit-text-stroke:0.32px #48555e;">Environment</span>
<span style="left:1433.20px;top:508.30px;font-size:14px;line-height:20px;color:#48555e;letter-spacing:-0.097px;-webkit-text-stroke:0.32px #48555e;">Service</span>
<svg style="left:577px;top:547.1px;" width="14" height="16" viewBox="0 0 14 16"><g fill="none" stroke="#6e7882" stroke-width="1.4" stroke-linejoin="round" stroke-linecap="butt"><path d="M4.3,3.2 L9.6,8 L4.3,12.8" stroke-linejoin="miter"/></g></svg>
<svg style="left:619.372px;top:547.372px;" width="13.056" height="13.056" viewBox="0 0 13.6 13.6"><path d="M6.8,0.7 L13.2,13.0 H0.4 Z" fill="#fa9d1c" stroke="#fa9d1c" stroke-width="0.6" stroke-linejoin="round"/><rect x="5.8" y="4.8" width="2" height="4.3" fill="#4d3307"/><rect x="5.8" y="10.1" width="2" height="1.5" fill="#4d3307"/></svg>
<span style="left:643.90px;top:546.00px;font-size:13px;line-height:20px;color:#535f68;letter-spacing:-0.032px;">Machine Learning job</span>
<span class="blur2" style="left:771.10px;top:546.00px;font-size:13px;line-height:20px;color:#535f68;letter-spacing:0.004px;">quasar-kfdt5-nightly--ljr6nu/runtime-addon-trigger-2.0.31-b6...</span>
<span style="left:1157.30px;top:545.30px;font-size:13px;line-height:20px;color:#535f68;letter-spacing:0.052px;">11 hours ago</span>
<span style="left:1297.50px;top:545.30px;font-size:13px;line-height:20px;color:#535f68;letter-spacing:-0.024px;">nightly--ljr6nu</span>
<svg style="left:1433.25px;top:549.40px;" width="12.16" height="12.16" viewBox="0 0 16 16"><path d="M10.25,0.97 C10.0,2.6 9.3,3.17 8.05,3.17 L4.68,3.17 C2.0,3.17 2.0,7.1 4.68,7.1 L10.15,7.1 C12.9,7.1 12.9,11.0 10.15,11.0 L6.57,11.0 C5.2,11.0 4.6,11.9 4.37,13.26" fill="none" stroke="#57cb4e" stroke-width="1.45" stroke-linecap="round" stroke-linejoin="round"/></svg>
<span style="left:1449.40px;top:545.30px;font-size:14px;line-height:20px;color:#535f68;letter-spacing:-0.048px;">ML</span>
<svg style="left:577px;top:584.1px;" width="14" height="16" viewBox="0 0 14 16"><g fill="none" stroke="#6e7882" stroke-width="1.4" stroke-linejoin="round" stroke-linecap="butt"><path d="M4.3,3.2 L9.6,8 L4.3,12.8" stroke-linejoin="miter"/></g></svg>
<svg style="left:619.372px;top:584.372px;" width="13.056" height="13.056" viewBox="0 0 13.6 13.6"><path d="M6.8,0.7 L13.2,13.0 H0.4 Z" fill="#fa9d1c" stroke="#fa9d1c" stroke-width="0.6" stroke-linejoin="round"/><rect x="5.8" y="4.8" width="2" height="4.3" fill="#4d3307"/><rect x="5.8" y="10.1" width="2" height="1.5" fill="#4d3307"/></svg>
<span style="left:643.90px;top:583.00px;font-size:13px;line-height:20px;color:#535f68;letter-spacing:-0.032px;">Machine Learning job</span>
<span style="left:771.10px;top:583.00px;font-size:13px;line-height:20px;color:#535f68;letter-spacing:0.000px;">q</span>
<span class="blur2" style="left:777.90px;top:583.00px;font-size:13px;line-height:20px;color:#535f68;letter-spacing:0.011px;">uasar-kfdt5-nightly--ljr6nu/runtime-addon-trigger-2.0.31-b6...</span>
<span style="left:1157.30px;top:582.30px;font-size:13px;line-height:20px;color:#535f68;letter-spacing:-0.036px;">13 hours ago</span>
<span style="left:1297.50px;top:582.30px;font-size:13px;line-height:20px;color:#535f68;letter-spacing:-0.024px;">nightly--ljr6nu</span>
<svg style="left:1433.25px;top:586.40px;" width="12.16" height="12.16" viewBox="0 0 16 16"><path d="M10.25,0.97 C10.0,2.6 9.3,3.17 8.05,3.17 L4.68,3.17 C2.0,3.17 2.0,7.1 4.68,7.1 L10.15,7.1 C12.9,7.1 12.9,11.0 10.15,11.0 L6.57,11.0 C5.2,11.0 4.6,11.9 4.37,13.26" fill="none" stroke="#57cb4e" stroke-width="1.45" stroke-linecap="round" stroke-linejoin="round"/></svg>
<span style="left:1449.40px;top:582.30px;font-size:14px;line-height:20px;color:#535f68;letter-spacing:-0.048px;">ML</span>
<span style="left:1177.90px;top:632.50px;font-size:14px;line-height:20px;color:#333;letter-spacing:-0.077px;">Displaying 1 - 2 of 2</span>
<div style="left:1308px;top:627px;width:32px;height:32px;box-sizing:border-box;border:1px solid #dcdcdc;border-radius:3px;background:#fff;"></div>
<svg style="left:1317px;top:636px;" width="14" height="14" viewBox="0 0 14 14"><g fill="none" stroke="#b9b9b9" stroke-width="1.1" stroke-linejoin="round" stroke-linecap="butt"><path d="M9.3,2.6 L4.3,7.3 L9.3,12" stroke-linejoin="miter"/></g></svg>
<div style="left:1348px;top:627px;width:32px;height:32px;box-sizing:border-box;border:1px solid #1b73d3;border-radius:3px;background:#fff;"></div>
<span style="left:1359.50px;top:633.00px;font-size:14px;line-height:20px;color:#1b73d3;letter-spacing:0.000px;">1</span>
<div style="left:1388px;top:627px;width:32px;height:32px;box-sizing:border-box;border:1px solid #dcdcdc;border-radius:3px;background:#fff;"></div>
<svg style="left:1397px;top:636px;" width="14" height="14" viewBox="0 0 14 14"><g fill="none" stroke="#b9b9b9" stroke-width="1.1" stroke-linejoin="round" stroke-linecap="butt"><path d="M4.7,2.6 L9.7,7.3 L4.7,12" stroke-linejoin="miter"/></g></svg>
<div style="left:1436px;top:627px;width:100px;height:32px;box-sizing:border-box;border:1px solid #5d6870;border-radius:3px;background:#fff;"></div>
<span style="left:1444.30px;top:633.00px;font-size:14px;line-height:20px;color:#222;letter-spacing:0.089px;">10 / page</span>
<svg style="left:1508.6px;top:636.5px;" width="14" height="14" viewBox="0 0 14 14"><g fill="none" stroke="#b5b5b5" stroke-width="1.1" stroke-linejoin="round" stroke-linecap="butt"><path d="M1.9,4.6 L6.9,10.2 L11.9,4.6"/></g></svg>
<div style="left:248px;top:1127px;width:1275px;height:15px;background:#fafafa;border-top:1px solid #e6e6e6;box-sizing:border-box;"></div>
<div style="left:250.7px;top:1131px;width:1263.3px;height:7.9px;background:#c8c8c8;border-radius:4px;"></div>
<svg style="left:76px;top:94px;" width="22" height="22" viewBox="0 0 22 22"><path d="M5.2,3.3 L5.9,2.4 L7.0,3.0 L9.0,8.0 L10.3,7.6 L11.3,8.6 L12.6,8.2 L13.6,9.2 L15.0,9.0 L16.3,10.5 L16.4,14.0 L14.8,17.0 L14.3,18.8 L9.0,18.8 L7.0,16.5 L3.3,11.8 L3.0,10.6 L4.2,10.0 L6.5,11.5 Z" fill="#fff" stroke="#0a0a0a" stroke-width="1.1" stroke-linejoin="round"/><path d="M9.4,12.2 V15.6 M11.35,12.2 V15.6 M13.4,12.2 V15.6" stroke="#222" stroke-width="0.75" fill="none"/></svg>
<svg style="left:0px;top:1134px;" width="8" height="8" viewBox="0 0 8 8"><path d="M0,0 V8 H8 A8,8 0 0 1 0,0 Z" fill="#cfd0d0"/></svg>
<svg style="left:1515px;top:1134px;" width="8" height="8" viewBox="0 0 8 8"><path d="M8,0 V8 H0 A8,8 0 0 0 8,0 Z" fill="#cfd0d0"/></svg>
</div></body></html>
